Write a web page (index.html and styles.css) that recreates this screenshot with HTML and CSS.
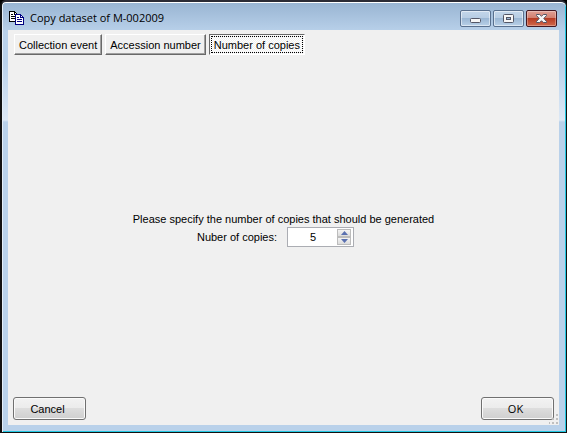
FILE: index.html
```html
<!DOCTYPE html>
<html lang="en">
<head>
    <meta charset="UTF-8">
    <title>Copy dataset of M-002009</title>
    <link rel="stylesheet" href="styles.css">
    <script src="main.js" defer></script>
</head>
<body>
<section class="window">
    <header class="titlebar">
        <svg class="app-icon" width="16" height="14" viewBox="0 0 16 14" shape-rendering="crispEdges">
            <path d="M.5 .5h5l3 3v7h-8z" fill="#fff" stroke="#000"/>
            <path d="M5.5 .5v3h3M2 3.5h2M2 5.5h5M2 7.5h5" fill="none" stroke="#000"/>
            <path d="M6.5 3.5h5l3 3v7h-8z" fill="#fff" stroke="#000080"/>
            <path d="M11.5 3.5v3h3M8 6.5h2M8 8.5h5M8 10.5h5" fill="none" stroke="#000080"/>
        </svg>
        <h1 class="title">Copy dataset of M-002009</h1>
        <div class="controls">
            <button type="button" class="control" aria-label="Minimize">
                <svg width="13" height="11" viewBox="0 0 13 11">
                    <rect x="1.5" y="5.5" width="10" height="4" rx="1" fill="#f6f6f6" stroke="#535666"/>
                </svg>
            </button>
            <button type="button" class="control" aria-label="Maximize">
                <svg width="13" height="11" viewBox="0 0 13 11">
                    <rect x="1.5" y="1.5" width="10" height="8" rx="1" fill="#f6f6f6" stroke="#535666"/>
                    <rect x="4.5" y="4.5" width="4" height="2" fill="#9db8d6" stroke="#535666"/>
                </svg>
            </button>
            <button type="button" class="control close" aria-label="Close">
                <svg width="13" height="11" viewBox="0 0 13 11">
                    <path d="M1.5 1.5h3.2L6.5 3.3 8.3 1.5h3.2v1L8.8 5.5l2.7 3v1H8.3L6.5 7.7 4.7 9.5H1.5v-1l2.7-3-2.7-3z" fill="#f6f6f6" stroke="#535666" stroke-linejoin="round"/>
                </svg>
            </button>
        </div>
    </header>
    <main class="client">
        <nav class="tabs">
            <button type="button" class="tab">Collection event</button>
            <button type="button" class="tab">Accession number</button>
            <button type="button" class="tab active">Number of copies</button>
        </nav>
        <div class="content">
            <p class="hint">Please specify the number of copies that should be generated</p>
            <div class="field">
                <label for="copies">Nuber of copies:</label>
                <div class="spinner">
                    <input type="number" id="copies" value="5" min="1">
                    <div class="arrows">
                        <button type="button" id="up" aria-label="More copies">
                            <svg width="7" height="4" viewBox="0 0 7 4"><path d="M0 4L3.5 0 7 4z" fill="#5a70b0"/></svg>
                        </button>
                        <button type="button" id="down" aria-label="Fewer copies">
                            <svg width="7" height="4" viewBox="0 0 7 4"><path d="M0 0h7L3.5 4z" fill="#5a70b0"/></svg>
                        </button>
                    </div>
                </div>
            </div>
        </div>
        <footer class="actions">
            <button type="button" class="btn">Cancel</button>
            <button type="button" class="btn ok">OK</button>
        </footer>
        <svg class="grip" width="10" height="10" viewBox="0 0 10 10" shape-rendering="crispEdges">
            <path d="M7 0h2v2H7zM7 4h2v2H7zM3 4h2v2H3zM7 8h2v2H7zM3 8h2v2H3zM0 8h1v2H0z" fill="#bfbfbf"/>
        </svg>
    </main>
</section>
</body>
</html>
```

FILE: styles.css
```css
* {
    box-sizing: border-box;
}
body {
    margin: 0;
    background: #000;
    font: 11px/16px "Liberation Sans", Arial, sans-serif;
    color: #000;
}
button,
input {
    margin: 0;
    padding: 0;
    font: inherit;
    color: inherit;
}
.window {
    display: flex;
    flex-direction: column;
    min-height: 100vh;
    padding: 0 7px 7px 6px;
    border: 1px solid #111;
    border-top: 2px solid #2b2b35;
    border-left-width: 2px;
    border-radius: 6px 6px 0 0;
    background: linear-gradient(#98b4d2, #b9d1ea 30px, #b9d1ea 60px, #dce8f5 118px, #b9d1ea 120px);
    box-shadow: inset 0 1px #fff, inset 1px 0 #e4eef8, inset -1px -1px #21c8e2;
}
.titlebar {
    display: flex;
    align-items: center;
    height: 28px;
    padding: 4px 2px 0 1px;
}
.title {
    flex: 1;
    margin: 0 0 0 5px;
    font: 11px/16px "Open Sans", "Noto Sans", sans-serif;
}
.controls {
    display: flex;
    gap: 2px;
}
.control {
    display: flex;
    align-items: center;
    justify-content: center;
    width: 31px;
    height: 17px;
    border: 1px solid #59708e;
    border-radius: 2px;
    background: linear-gradient(#c3d6ea, #b6cce3 50%, #9bb7d4 50%, #b9d1e8);
    box-shadow: inset 0 0 0 1px rgba(255, 255, 255, .5);
}
.close {
    border-color: #431822;
    background: linear-gradient(#e0a095, #d17c6c 50%, #b73c24 50%, #d0694c);
    box-shadow: inset 0 0 0 1px rgba(255, 255, 255, .3);
}
.client {
    position: relative;
    display: flex;
    flex: 1;
    flex-direction: column;
    padding: 4px 5px 5px;
    background: #f0f0f0;
}
.tabs {
    display: flex;
    gap: 3px;
    padding-left: 1px;
}
.tab {
    height: 21px;
    padding: 0 4px;
    border: 1px solid;
    border-color: #fff #696969 #696969 #fff;
    background: #f0f0f0;
    box-shadow: inset -1px -1px #a0a0a0;
}
.active {
    padding-top: 1px;
    border-color: #696969 #fff #fff #696969;
    background: repeating-conic-gradient(#fff 0 25%, #f0f0f0 0 50%) 0 0 / 2px 2px;
    box-shadow: none;
    outline: 1px dotted #000;
    outline-offset: -3px;
}
.content {
    display: flex;
    flex: 1;
    flex-direction: column;
    align-items: center;
    justify-content: center;
    padding-top: 6px;
}
.hint {
    margin: 0;
}
.field {
    display: flex;
    align-items: center;
    gap: 10px;
    padding-right: 16px;
}
.spinner {
    display: flex;
    width: 67px;
    height: 20px;
    padding: 1px 2px 1px 1px;
    border: 1px solid #abadb3;
    background: #fff;
}
#copies {
    flex: 1;
    width: 0;
    height: 16px;
    border: 0;
    background: none;
    text-align: center;
    outline: none;
    appearance: textfield;
}
#copies::-webkit-inner-spin-button {
    display: none;
}
.arrows {
    display: flex;
    flex-direction: column;
    width: 14px;
}
.arrows button {
    display: flex;
    flex: 1;
    align-items: center;
    justify-content: center;
    border: 1px solid #bcbcbc;
    background: linear-gradient(#f4f4f4, #dcdcdc);
}
.actions {
    display: flex;
    justify-content: space-between;
}
.btn {
    width: 73px;
    height: 23px;
    padding-right: 4px;
    border: 1px solid #707070;
    border-radius: 3px;
    background: linear-gradient(#f2f2f2, #ebebeb 50%, #dddddd 50%, #cfcfcf);
    box-shadow: inset 0 0 0 1px #fafafa;
}
.ok {
    font: 11px/16px "Open Sans", "Noto Sans", sans-serif;
}
.grip {
    position: absolute;
    right: 0;
    bottom: 1px;
}
```

FILE: main.js
```javascript
var copies = document.getElementById("copies");

document.getElementById("up").onclick = function () {
    copies.stepUp();
}

document.getElementById("down").onclick = function () {
    copies.stepDown();
}
```
